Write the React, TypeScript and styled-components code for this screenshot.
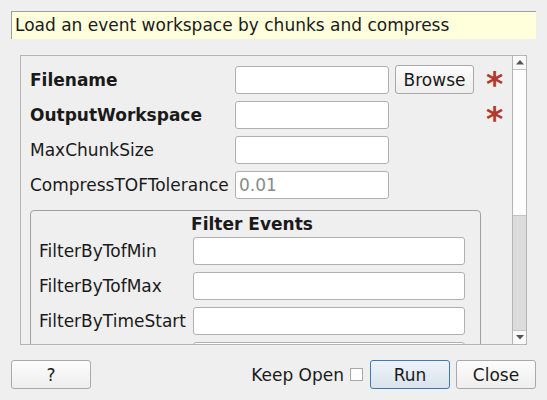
import React from "react";
import styled, { createGlobalStyle } from "styled-components";

const Global = createGlobalStyle`
  html, body { margin: 0; padding: 0; background: #efefef; }
  body { font-family: "DejaVu Sans", "Liberation Sans", sans-serif; font-size: 17px; color: #1a1a1a; }
  * { box-sizing: border-box; }
`;

const Page = styled.div`
  width: 547px;
  height: 400px;
  padding: 11px;
  display: flex;
  flex-direction: column;
`;

const Description = styled.div`
  height: 28px;
  background: #ffffdc;
  border-top: 1px solid #a0a0a0;
  border-left: 1px solid #a0a0a0;
  padding-left: 3px;
  line-height: 27px;
  white-space: nowrap;
`;

const ScrollArea = styled.div`
  margin: 16px 9px 0;
  height: 290px;
  border: 1px solid #b4b4b4;
  display: flex;
  overflow: hidden;
`;

const Viewport = styled.div`
  flex: 1;
  padding: 9px 0 0 9px;
  overflow: hidden;
`;

const PropGrid = styled.div`
  display: grid;
  grid-template-columns: 199px 154px 79px 30px;
  column-gap: 6px;
  row-gap: 7px;
  align-items: center;
`;

const Label = styled.div<{ $bold?: boolean }>`
  font-weight: ${(p) => (p.$bold ? "bold" : "normal")};
  white-space: nowrap;
  line-height: 28px;
`;

const Input = styled.div<{ $placeholder?: boolean }>`
  height: 28px;
  background: #fff;
  border: 1px solid #b0b0b0;
  border-radius: 3px;
  padding-left: 3px;
  line-height: 26px;
  color: ${(p) => (p.$placeholder ? "#8a8a8a" : "#1a1a1a")};
`;

const Button = styled.div<{ $primary?: boolean }>`
  height: 29px;
  width: 80px;
  display: flex;
  align-items: center;
  justify-content: center;
  border: 1px solid ${(p) => (p.$primary ? "#3d7ab3" : "#a9a9a9")};
  border-radius: 3px;
  background: ${(p) =>
    p.$primary
      ? "linear-gradient(#eef3f8, #d9e3ed)"
      : "linear-gradient(#fcfcfc, #eeeeee)"};
`;

const BrowseButton = styled(Button)`
  width: 79px;
  height: 29px;
`;

const CloseButton = styled(Button)`
  margin-left: 6px;
`;

const Star = styled.div`
  color: #b23a2c;
  font-weight: bold;
  font-size: 33px;
  line-height: 28px;
  height: 28px;
  padding-left: 6px;
  padding-top: 5px;
`;

const GroupBox = styled.div`
  margin-top: 11px;
  width: 451px;
  border: 1px solid #a0a0a0;
  border-radius: 4px;
  padding: 3px 15px 0 8px;
`;

const GroupTitle = styled.div`
  font-weight: bold;
  text-align: center;
  line-height: 20px;
  height: 20px;
  margin-bottom: 3px;
`;

const GroupGrid = styled.div`
  display: grid;
  grid-template-columns: 148px 1fr;
  column-gap: 6px;
  row-gap: 7px;
  align-items: center;
`;

const ScrollBar = styled.div`
  width: 14px;
  border-left: 1px solid #b4b4b4;
  display: flex;
  flex-direction: column;
  background: #dcdcdc;
`;

const ArrowButton = styled.div<{ $down?: boolean }>`
  height: 14px;
  background: #fafafa;
  border-bottom: ${(p) => (p.$down ? "none" : "1px solid #c4c4c4")};
  border-top: ${(p) => (p.$down ? "1px solid #c4c4c4" : "none")};
  display: flex;
  align-items: center;
  justify-content: center;
  margin-top: ${(p) => (p.$down ? "auto" : "0")};
`;

const Handle = styled.div`
  height: 146px;
  background: #fdfdfd;
  border-bottom: 1px solid #c4c4c4;
`;

const Footer = styled.div`
  margin-top: 15px;
  display: flex;
  align-items: center;
`;

const Spacer = styled.div`
  flex: 1;
`;

const KeepOpen = styled.div`
  margin-right: 6px;
`;

const Check = styled.div`
  width: 13px;
  height: 13px;
  background: #fff;
  border: 1px solid #a8a8a8;
  margin-right: 7px;
`;

const Tri = ({ down }: { down?: boolean }) => (
  <svg width="8" height="5" viewBox="0 0 8 5">
    <polygon
      points={down ? "0,0 8,0 4,4.5" : "0,4.5 8,4.5 4,0"}
      fill="#555"
    />
  </svg>
);

const mainRows = [
  { label: "Filename", bold: true, browse: true, star: true },
  { label: "OutputWorkspace", bold: true, star: true },
  { label: "MaxChunkSize" },
  { label: "CompressTOFTolerance", value: "0.01" },
];

const filterRows = [
  "FilterByTofMin",
  "FilterByTofMax",
  "FilterByTimeStart",
  "FilterByTimeStop",
];

export default function App() {
  return (
    <>
      <Global />
      <Page>
        <Description>Load an event workspace by chunks and compress</Description>
        <ScrollArea>
          <Viewport>
            <PropGrid>
              {mainRows.map((r) => (
                <React.Fragment key={r.label}>
                  <Label $bold={r.bold}>{r.label}</Label>
                  <Input $placeholder={!!r.value}>{r.value}</Input>
                  {r.browse ? <BrowseButton>Browse</BrowseButton> : <div />}
                  {r.star ? <Star>*</Star> : <div />}
                </React.Fragment>
              ))}
            </PropGrid>
            <GroupBox>
              <GroupTitle>Filter Events</GroupTitle>
              <GroupGrid>
                {filterRows.map((l) => (
                  <React.Fragment key={l}>
                    <Label>{l}</Label>
                    <Input />
                  </React.Fragment>
                ))}
              </GroupGrid>
            </GroupBox>
          </Viewport>
          <ScrollBar>
            <ArrowButton>
              <Tri />
            </ArrowButton>
            <Handle />
            <ArrowButton $down>
              <Tri down />
            </ArrowButton>
          </ScrollBar>
        </ScrollArea>
        <Footer>
          <Button>?</Button>
          <Spacer />
          <KeepOpen>Keep Open</KeepOpen>
          <Check />
          <Button $primary>Run</Button>
          <CloseButton>Close</CloseButton>
        </Footer>
      </Page>
    </>
  );
}
